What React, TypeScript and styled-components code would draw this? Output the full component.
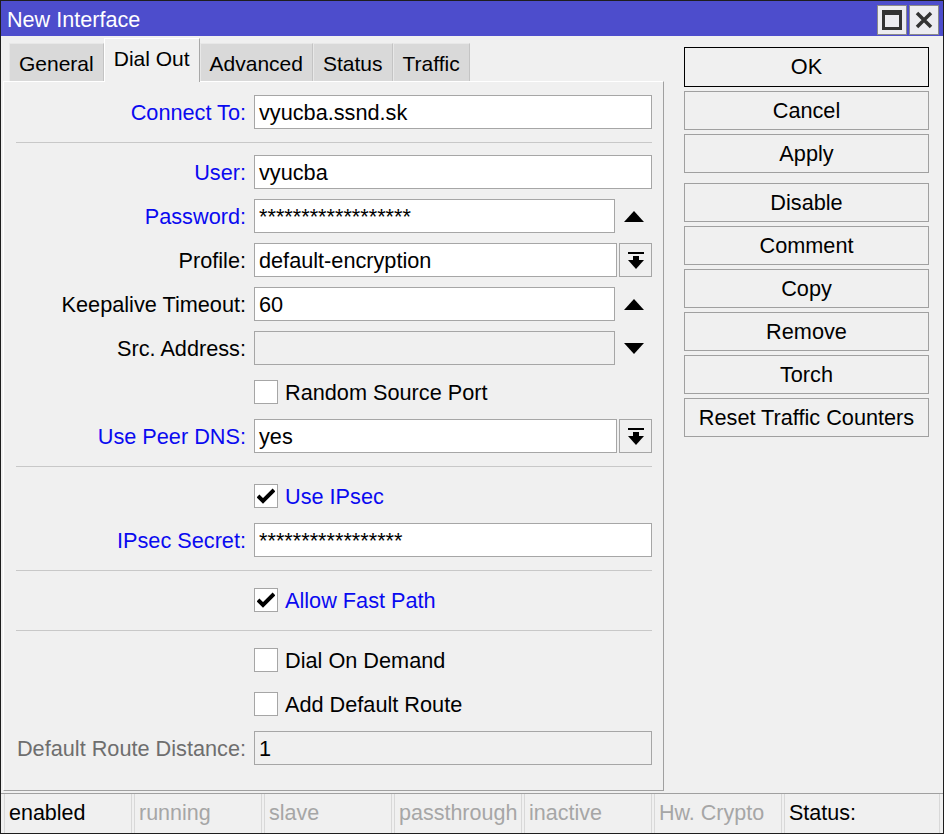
import React from "react";
import styled, { createGlobalStyle, css } from "styled-components";

const GlobalStyle = createGlobalStyle`
  html, body {
    margin: 0;
    padding: 0;
    background: #f0f0f0;
  }
  * {
    box-sizing: border-box;
  }
`;

const Window = styled.div`
  width: 944px;
  height: 834px;
  border: 1px solid #1e1e1e;
  background: #f0f0f0;
  display: flex;
  flex-direction: column;
  font-family: "Liberation Sans", Arial, sans-serif;
  font-size: 21.7px;
  color: #000;
  overflow: hidden;
`;

const TitleBar = styled.div`
  height: 35px;
  flex: none;
  background: #4d4dcc;
  display: flex;
  align-items: center;
  padding-left: 6px;
  padding-right: 4px;
`;

const Title = styled.div`
  color: #fff;
  font-size: 21.6px;
  padding-top: 3px;
  flex: 1;
`;

const TitleButton = styled.div`
  width: 30px;
  height: 30px;
  margin-left: 2px;
  margin-top: 2px;
  background: #ececf0;
  border: 1px solid #8a8a8a;
  display: flex;
  align-items: center;
  justify-content: center;
`;

const Main = styled.div`
  flex: 1;
  display: flex;
  min-height: 0;
`;

const LeftColumn = styled.div`
  width: 661px;
  margin-left: 2px;
  display: flex;
  flex-direction: column;
`;

const TabRow = styled.div`
  height: 45px;
  flex: none;
  display: flex;
  align-items: flex-end;
  padding-left: 6px;
  position: relative;
  z-index: 1;
  font-size: 21px;
`;

const Tab = styled.div<{ $active?: boolean }>`
  height: 38px;
  padding: 2px 9px 0;
  display: flex;
  align-items: center;
  background: #d9d9d9;
  border: 1px solid #e8e8e8;
  border-right-color: #c4c4c4;
  border-bottom: none;
  white-space: nowrap;
  ${({ $active }) =>
    $active &&
    css`
      height: 44px;
      margin-bottom: -1px;
      padding-bottom: 6px;
      background: #f0f0f0;
      border-color: #ffffff;
      border-right-color: #a8a8a8;
    `}
`;

const Panel = styled.div`
  flex: 1;
  border: 1px solid #ffffff;
  border-right-color: #a0a0a0;
  border-bottom-color: #a0a0a0;
  padding: 13px 11px 0 0;
  display: flex;
  flex-direction: column;
`;

const Row = styled.div`
  height: 34px;
  margin-bottom: 10px;
  display: grid;
  grid-template-columns: 242px 1fr;
  column-gap: 8px;
  align-items: center;
`;

const Label = styled.div<{ $tone?: "blue" | "black" | "grey" }>`
  text-align: right;
  white-space: nowrap;
  padding-top: 2px;
  color: ${({ $tone }) =>
    $tone === "blue" ? "#0a0af0" : $tone === "grey" ? "#6e6e6e" : "#000"};
`;

const Field = styled.div`
  display: flex;
  align-items: center;
  height: 34px;
`;

const Input = styled.div<{ $disabled?: boolean }>`
  flex: 1;
  height: 34px;
  background: ${({ $disabled }) => ($disabled ? "#f0f0f0" : "#ffffff")};
  border: 1px solid #a6a6a6;
  padding: 2px 0 0 4px;
  display: flex;
  align-items: center;
  white-space: nowrap;
  overflow: hidden;
`;

const SideButton = styled.div<{ $boxed?: boolean }>`
  width: ${({ $boxed }) => ($boxed ? "33px" : "37px")};
  margin-left: ${({ $boxed }) => ($boxed ? "2px" : "0")};
  height: 34px;
  flex: none;
  display: flex;
  align-items: center;
  justify-content: center;
  border: 1px solid ${({ $boxed }) => ($boxed ? "#a6a6a6" : "transparent")};
`;

const Separator = styled.div`
  height: 1px;
  background: #c8c8c8;
  margin: 3px 0 12px 12px;
  flex: none;
`;

const CheckLine = styled.div`
  display: flex;
  align-items: center;
  gap: 7px;
`;

const Box = styled.div`
  width: 24px;
  height: 24px;
  background: #fff;
  border: 1px solid #a6a6a6;
  display: flex;
  align-items: center;
  justify-content: center;
`;

const CheckText = styled.span<{ $blue?: boolean }>`
  padding-top: 2px;
  color: ${({ $blue }) => ($blue ? "#0a0af0" : "#000")};
`;

const RightColumn = styled.div`
  width: 245px;
  margin-left: 20px;
  padding-top: 11px;
  display: flex;
  flex-direction: column;
`;

const Button = styled.div<{ $default?: boolean; $groupEnd?: boolean }>`
  height: 39px;
  margin-bottom: ${({ $groupEnd }) => ($groupEnd ? "10px" : "4px")};
  border: 1px solid #a0a0a0;
  background: #f0f0f0;
  display: flex;
  align-items: center;
  justify-content: center;
  white-space: nowrap;
  ${({ $default }) =>
    $default &&
    css`
      height: 40px;
      border: 1px solid #000;
      box-shadow: inset 0 0 0 1px #f0f0f0;
    `}
`;

const StatusBar = styled.div`
  height: 40px;
  margin-top: 2px;
  flex: none;
  display: flex;
  gap: 2px;
  padding: 0 3px 0 3px;
  border-top: 1px solid #a0a0a0;
  font-size: 21.5px;
`;

const StatusCell = styled.div<{ $off?: boolean; $grow?: boolean }>`
  width: 128px;
  flex: ${({ $grow }) => ($grow ? 1 : "none")};
  border-left: 1px solid #d8d8d8;
  border-right: 1px solid #d8d8d8;
  padding-left: 4px;
  display: flex;
  align-items: center;
  color: ${({ $off }) => ($off ? "#a6a6a6" : "#000")};
  white-space: nowrap;
  overflow: hidden;
`;

const UpArrow = () => (
  <svg width="20" height="11" viewBox="0 0 20 11">
    <polygon points="10,0 20,11 0,11" fill="#000" />
  </svg>
);

const DownArrow = () => (
  <svg width="20" height="11" viewBox="0 0 20 11">
    <polygon points="0,0 20,0 10,11" fill="#000" />
  </svg>
);

const DropIcon = () => (
  <svg width="16" height="17" viewBox="0 0 16 17">
    <rect x="0" y="0" width="16" height="2" fill="#000" />
    <rect x="5" y="4" width="6" height="5" fill="#000" />
    <polygon points="0,8 16,8 8,17" fill="#000" />
  </svg>
);

const CheckMark = () => (
  <svg width="18" height="16" viewBox="0 0 18 16">
    <path d="M1 8 L6 13 L17 2" fill="none" stroke="#000" strokeWidth="4" />
  </svg>
);

const MaximizeIcon = () => (
  <svg width="20" height="20" viewBox="0 0 20 20">
    <rect x="1.5" y="1.5" width="17" height="17" fill="none" stroke="#333" strokeWidth="3" />
    <rect x="1" y="1" width="18" height="4" fill="#333" />
  </svg>
);

const CloseIcon = () => (
  <svg width="18" height="18" viewBox="0 0 18 18">
    <path d="M2 2 L16 16 M16 2 L2 16" stroke="#333" strokeWidth="3.5" />
  </svg>
);

type FieldRowProps = {
  label: string;
  tone?: "blue" | "black" | "grey";
  value?: string;
  disabled?: boolean;
  side?: "up" | "down" | "drop";
};

const FieldRow = ({ label, tone = "black", value = "", disabled, side }: FieldRowProps) => (
  <Row>
    <Label $tone={tone}>{label}</Label>
    <Field>
      <Input $disabled={disabled}>{value}</Input>
      {side === "up" && (
        <SideButton>
          <UpArrow />
        </SideButton>
      )}
      {side === "down" && (
        <SideButton>
          <DownArrow />
        </SideButton>
      )}
      {side === "drop" && (
        <SideButton $boxed>
          <DropIcon />
        </SideButton>
      )}
    </Field>
  </Row>
);

const CheckRow = ({ text, checked, blue }: { text: string; checked?: boolean; blue?: boolean }) => (
  <Row>
    <div />
    <CheckLine>
      <Box>{checked && <CheckMark />}</Box>
      <CheckText $blue={blue}>{text}</CheckText>
    </CheckLine>
  </Row>
);

const tabs = ["General", "Dial Out", "Advanced", "Status", "Traffic"];

const statuses = [
  { text: "enabled", off: false },
  { text: "running", off: true },
  { text: "slave", off: true },
  { text: "passthrough", off: true },
  { text: "inactive", off: true },
  { text: "Hw. Crypto", off: true },
];

export default function App() {
  return (
    <>
      <GlobalStyle />
      <Window>
        <TitleBar>
          <Title>New Interface</Title>
          <TitleButton>
            <MaximizeIcon />
          </TitleButton>
          <TitleButton>
            <CloseIcon />
          </TitleButton>
        </TitleBar>
        <Main>
          <LeftColumn>
            <TabRow>
              {tabs.map((t) => (
                <Tab key={t} $active={t === "Dial Out"}>
                  {t}
                </Tab>
              ))}
            </TabRow>
            <Panel>
              <FieldRow label="Connect To:" tone="blue" value="vyucba.ssnd.sk" />
              <Separator />
              <FieldRow label="User:" tone="blue" value="vyucba" />
              <FieldRow label="Password:" tone="blue" value="******************" side="up" />
              <FieldRow label="Profile:" value="default-encryption" side="drop" />
              <FieldRow label="Keepalive Timeout:" value="60" side="up" />
              <FieldRow label="Src. Address:" disabled side="down" />
              <CheckRow text="Random Source Port" />
              <FieldRow label="Use Peer DNS:" tone="blue" value="yes" side="drop" />
              <Separator />
              <CheckRow text="Use IPsec" checked blue />
              <FieldRow label="IPsec Secret:" tone="blue" value="*****************" />
              <Separator />
              <CheckRow text="Allow Fast Path" checked blue />
              <Separator />
              <CheckRow text="Dial On Demand" />
              <CheckRow text="Add Default Route" />
              <FieldRow label="Default Route Distance:" tone="grey" value="1" disabled />
            </Panel>
          </LeftColumn>
          <RightColumn>
            <Button $default>OK</Button>
            <Button>Cancel</Button>
            <Button $groupEnd>Apply</Button>
            <Button>Disable</Button>
            <Button>Comment</Button>
            <Button>Copy</Button>
            <Button>Remove</Button>
            <Button>Torch</Button>
            <Button>Reset Traffic Counters</Button>
          </RightColumn>
        </Main>
        <StatusBar>
          {statuses.map((s) => (
            <StatusCell key={s.text} $off={s.off}>
              {s.text}
            </StatusCell>
          ))}
          <StatusCell $grow>Status:</StatusCell>
        </StatusBar>
      </Window>
    </>
  );
}
